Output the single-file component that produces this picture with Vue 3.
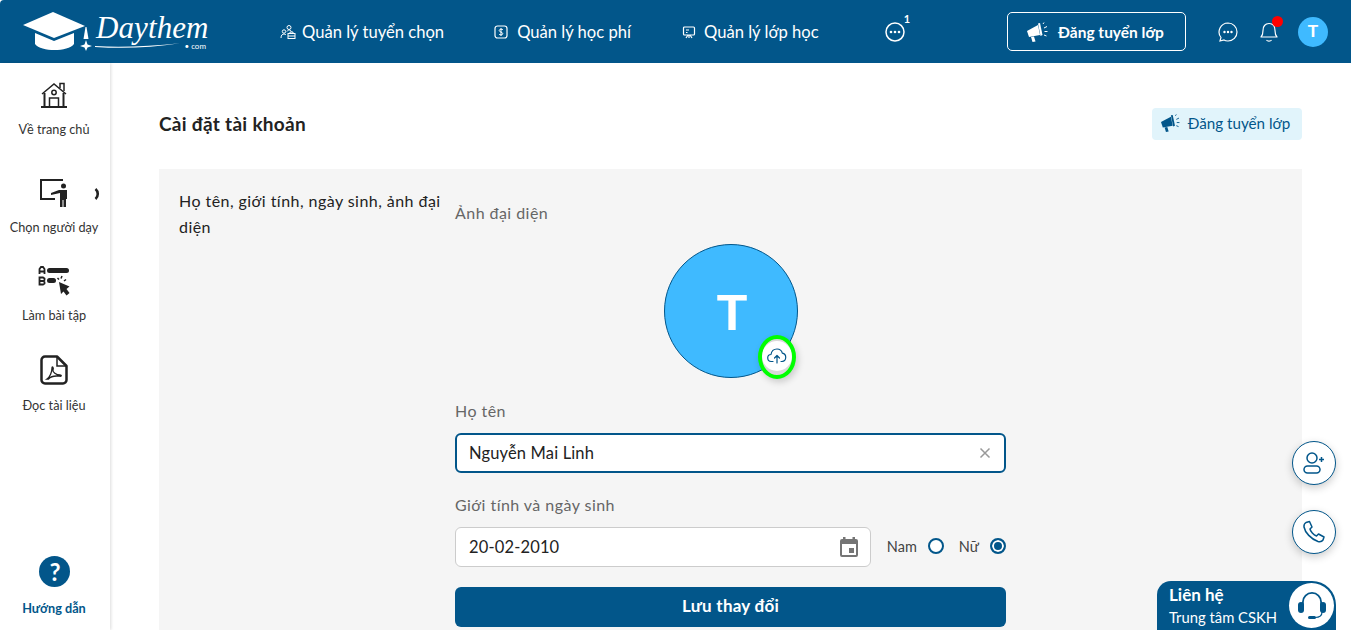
<template>
  <div class="page">
    <header class="topbar">
      <div class="logo">
        <svg class="cap" width="80" height="42" viewBox="0 0 80 42" fill="#fff">
          <path d="M0 13 L30 0 L62 14 L31 26 Z" />
          <path d="M12 21 L31 29 L51 21 V32 C45 40 18 40 12 32 Z" />
          <path d="M62.500 15 L63.500 15 L65.500 27 H60.500 Z" />
          <path d="M63 28 L64.500 32.500 L69 34 L64.500 35.500 L63 39 L61.500 35.500 L57 34 L61.500 32.500 Z" />
        </svg>
        <div class="logo-word">
          <span class="logo-name">Daythem</span>
          <svg class="swoosh" width="85" height="5" viewBox="0 0 92 5"><path d="M0 3 C30 5 60 3 92 0 C60 5 30 6 0 4Z" fill="#fff" /></svg>
          <span class="logo-com">• com</span>
        </div>
      </div>
      <nav class="mainnav">
        <a class="navitem hire">
          <svg width="16" height="16" viewBox="0 0 16 16" fill="none" stroke="#fff" stroke-width="1">
            <circle cx="9" cy="3.500" r="2" /><circle cx="4" cy="7.500" r="1.700" />
            <path d="M1 14c0-3 1.500-4 3-4 1 0 1.500.4 2 1M7 7.500c.5-1 1.200-1.500 2-1.500s2 .5 2.500 1.500" />
            <rect x="8" y="9.500" width="7" height="5" /><path d="M10 9.500V8h3v1.500M8 12h7" />
          </svg>
          Quản lý tuyển chọn
        </a>
        <a class="navitem fee">
          <svg width="14" height="14" viewBox="0 0 14 14" fill="none" stroke="#fff" stroke-width="1.200">
            <rect x="1" y="1" width="12" height="12" rx="2.500" />
            <path d="M9 4.800C8.500 4 5.200 3.800 5.200 5.500S8.800 7 8.800 8.700 5.500 10 5 9.200M7 3v8" stroke-width="1" />
          </svg>
          Quản lý học phí
        </a>
        <a class="navitem klass">
          <svg width="14" height="14" viewBox="0 0 14 14" fill="none" stroke="#fff" stroke-width="1.200">
            <rect x="1.500" y="2" width="11" height="8" rx="1" />
            <path d="M4 5h3M4 7.500h1.500M7 10v3M4 13l2-3M10 13l-2-3" />
          </svg>
          Quản lý lớp học
        </a>
        <a class="more">
          <svg width="20" height="20" viewBox="0 0 20 20" fill="none">
            <circle cx="10" cy="10" r="9" stroke="#fff" stroke-width="1.500" />
            <circle cx="6" cy="10" r="1.300" fill="#fff" /><circle cx="10" cy="10" r="1.300" fill="#fff" /><circle cx="14" cy="10" r="1.300" fill="#fff" />
          </svg>
          <b class="more-count">1</b>
        </a>
      </nav>
      <button class="post-btn">
        <svg class="horn" width="22" height="20" viewBox="0 0 22 20" fill="#fff">
          <path d="M1 9 L12 3 L14 13 L3 15 Z" />
          <path d="M12 1.500 L14 1 L16.500 13 L14.500 14 Z" />
          <path d="M5 15 L8 14.500 L9.500 19.500 L6.500 20 Z" />
          <path d="M17 2l1-1.500M18 6l3-1.500M18.500 9.500h3M18 13l2.500 1" stroke="#fff" fill="none" />
        </svg>
        Đăng tuyển lớp
      </button>
      <div class="top-icons">
        <svg width="20" height="20" viewBox="0 0 20 20" fill="none" stroke="#fff" stroke-width="1.200">
          <path d="M10 1a9 9 0 0 1 0 18c-1.500 0-3-.3-4-1l-4 1 1-3.500A9 9 0 0 1 10 1Z" />
          <circle cx="6.500" cy="10" r=".6" fill="#fff" /><circle cx="10" cy="10" r=".6" fill="#fff" /><circle cx="13.500" cy="10" r=".6" fill="#fff" />
        </svg>
        <span class="bell">
          <svg width="20" height="24" viewBox="0 0 20 24" fill="none" stroke="#fff" stroke-width="1.200">
            <path d="M2 17c1.500-1.500 2-3 2-6.500C4 6 6.500 3.500 10 3.500S16 6 16 10.500c0 3.500.5 5 2 6.500Z" stroke-linejoin="round" />
            <path d="M7.500 20c1 1.500 4 1.500 5 0" />
          </svg>
          <i class="bell-dot"></i>
        </span>
        <span class="avatar-small">T</span>
      </div>
    </header>

    <div class="body">
      <aside class="sidebar">
        <a class="side-item home">
          <svg width="28" height="26" viewBox="0 0 28 26" fill="none" stroke="#222" stroke-width="1.500">
            <path d="M2 12 L14 2 L26 12" /><path d="M20 6V1.500h4v7.500" />
            <path d="M4.500 11v13M23.500 11v13M1 25h26" stroke-width="2" />
            <circle cx="14" cy="10.500" r="2.200" /><path d="M9.500 24v-8h9v8" />
          </svg>
          <span>Về trang chủ</span>
        </a>
        <a class="side-item teacher">
          <svg width="30" height="30" viewBox="0 0 30 30" fill="#222">
            <path d="M1 1h23v2H3v17h13v2H1Z" />
            <circle cx="24.500" cy="8" r="2.500" />
            <path d="M12 15l8-3h8v9h-1v8h-2.500v-7h-1v7H21V15l-9 2Z" />
          </svg>
          <svg class="chev" width="6" height="12" viewBox="0 0 6 12" fill="none" stroke="#222" stroke-width="2.600"><path d="M1.500 1c3 2.500 3 7.500 0 10" /></svg>
          <span>Chọn người dạy</span>
        </a>
        <a class="side-item exercise">
          <svg width="32" height="30" viewBox="0 0 32 30" fill="#222">
            <rect x="9" y="2" width="22" height="5" rx="2.500" />
            <rect x="9" y="12" width="9" height="5" rx="2.500" />
            <path d="M21 16 L31.500 20.500 L28.500 23 L31.500 27 L28.500 29.500 L25.500 25.500 L23 28 Z" />
            <path d="M1.500 8V3L3 1h2l1.500 2v5M1.500 5.500h5" fill="none" stroke="#222" stroke-width="1.800" />
            <path d="M1.500 11.500H5l1.500 1v1.500l-1 1 1 1v1.500l-1.500 1H1.500ZM1.500 15h4" fill="none" stroke="#222" stroke-width="1.800" />
            <path d="M19.500 12l1.500 1.500M24 10l-1 2.500M28 13.500l-2 1.500" fill="none" stroke="#222" stroke-width="1.500" />
          </svg>
          <span>Làm bài tập</span>
        </a>
        <a class="side-item docs">
          <svg width="28" height="30" viewBox="0 0 28 30" fill="none" stroke="#222" stroke-width="2.500">
            <path d="M17 1.500H5A3.500 3.500 0 0 0 1.500 5v20A3.500 3.500 0 0 0 5 28.500h18a3.500 3.500 0 0 0 3.500-3.500V11Z" stroke-linejoin="round" />
            <path d="M17 1.500V11h9.500" stroke-width="1.500" />
            <path d="M7 24c3-2 5-7 5-11 0-2 2-1 1 2-.5 2 3 5 7 5 2 0 1.500 1.500-.5 1.200-4-.5-9 .5-11 2.800Z" stroke-width="1.300" />
          </svg>
          <span>Đọc tài liệu</span>
        </a>
        <a class="side-item help">
          <i class="help-icon">?</i>
          <span>Hướng dẫn</span>
        </a>
      </aside>

      <main class="content">
        <div class="content-head">
          <h1>Cài đặt tài khoản</h1>
          <button class="post-light">
            <svg width="20" height="18" viewBox="0 0 22 20" fill="#02568a">
              <path d="M1 9 L12 3 L14 13 L3 15 Z" />
              <path d="M12 1.500 L14 1 L16.500 13 L14.500 14 Z" />
              <path d="M5 15 L8 14.500 L9.500 19.500 L6.500 20 Z" />
              <path d="M17 2l1-1.500M18 6l3-1.500M18.500 9.500h3M18 13l2.500 1" stroke="#02568a" fill="none" />
            </svg>
            Đăng tuyển lớp
          </button>
        </div>

        <section class="panel">
          <div class="panel-title">Họ tên, giới tính, ngày sinh, ảnh đại diện</div>
          <form class="panel-form" @submit.prevent>
            <label class="field-label first">Ảnh đại diện</label>
            <div class="avatar-wrap">
              <div class="avatar-big">
                T
                <span class="upload">
                  <span class="upload-inner">
                    <svg width="20" height="16" viewBox="0 0 20 16" fill="none" stroke="#02568a" stroke-width="1.200" stroke-linecap="round" stroke-linejoin="round">
                      <path d="M6 13.500H4.500a3.500 3.500 0 0 1-.5-7C4.500 3 7 1 10 1c2.700 0 4.700 1.700 5.300 4.200A4.200 4.200 0 0 1 15 13.500h-1" />
                      <path d="M10 15V7.500M7.500 10 10 7.500l2.500 2.500" />
                    </svg>
                  </span>
                </span>
              </div>
            </div>
            <label class="field-label name-label">Họ tên</label>
            <div class="input focus">
              <span>Nguyễn Mai Linh</span>
              <svg width="12" height="12" viewBox="0 0 12 12" stroke="#999" stroke-width="1.500"><path d="M1.500 1.500l9 9M10.500 1.500l-9 9" /></svg>
            </div>
            <label class="field-label gender-label">Giới tính và ngày sinh</label>
            <div class="row">
              <div class="input date">
                <span>20-02-2010</span>
                <svg width="20" height="22" viewBox="0 0 20 22" fill="#757575">
                  <path d="M4 1h2.500v2h7V1H16v2h1a2 2 0 0 1 2 2v14a2 2 0 0 1-2 2H3a2 2 0 0 1-2-2V5a2 2 0 0 1 2-2h1Zm-1 7v11h14V8Z" />
                  <rect x="10" y="12" width="5" height="5" />
                </svg>
              </div>
              <div class="radios">
                <span class="radio-text">Nam</span><i class="radio"></i>
                <span class="radio-text nu">Nữ</span><i class="radio on"></i>
              </div>
            </div>
            <button class="save">Lưu thay đổi</button>
          </form>
        </section>
      </main>
    </div>

    <button class="float-btn add">
      <svg width="24" height="24" viewBox="0 0 24 24" fill="none" stroke="#02568a" stroke-width="1.500">
        <circle cx="10" cy="7" r="5" /><rect x="2" y="15" width="16" height="7" rx="3.500" /><path d="M17 8.500h5M19.500 6v5" />
      </svg>
    </button>
    <button class="float-btn phone">
      <svg width="24" height="24" viewBox="0 0 24 24" fill="none" stroke="#02568a" stroke-width="1.500" stroke-linejoin="round">
        <path d="M4 2.500 7.500 1.500 10 7 8 9c.5 2.500 3.500 6 6.500 7l2-2 5.500 3-1 3c-1 1.500-3 2-5 1.500C9 19 3 12.500 2 7c-.3-2 .5-3.500 2-4.500Z" />
      </svg>
    </button>
    <div class="contact">
      <div class="contact-text">
        <b>Liên hệ</b>
        <span>Trung tâm CSKH</span>
      </div>
      <span class="contact-icon">
        <svg width="28" height="30" viewBox="0 0 28 30" fill="#02568a">
          <path d="M4 14V11a10 10 0 0 1 20 0v3h-1.800v-3a8.200 8.200 0 0 0-16.400 0v3Z" />
          <rect x="0" y="11" width="6" height="11" rx="3" />
          <rect x="22" y="11" width="6" height="11" rx="3" />
          <path d="M24 21c0 4-3 5.500-7 5.500" fill="none" stroke="#02568a" stroke-width="1.200" />
          <rect x="10" y="25" width="8" height="3" rx="1.500" />
        </svg>
      </span>
    </div>
  </div>
</template>

<script setup>
</script>

<style>
html, body {
  margin: 0;
  background: #fff;
  overflow: hidden;
}
</style>

<style scoped>
.page {
  width: 1351px;
  height: 630px;
  overflow: hidden;
  position: relative;
  border-top-left-radius: 4px;
  font-family: "Lato", "Noto Sans", sans-serif;
  color: #222;
}
button {
  font-family: inherit;
  cursor: pointer;
}
.topbar {
  height: 63px;
  background: #02568a;
  display: flex;
  align-items: center;
  color: #fff;
}
.logo {
  width: 280px;
  flex: none;
  display: flex;
  align-items: center;
  padding-left: 23px;
  box-sizing: border-box;
}
.cap {
  flex: none;
  margin-top: 3px;
}
.logo-word {
  position: relative;
  margin-left: -6px;
  width: 115px;
  height: 48px;
}
.logo-name {
  position: absolute;
  left: -1px;
  top: 9px;
  font: italic 31px/22px "Liberation Serif", serif;
  letter-spacing: 0.1px;
}
.swoosh {
  position: absolute;
  left: -2px;
  top: 35px;
}
.logo-com {
  position: absolute;
  right: 6px;
  top: 34px;
  font-size: 8px;
  line-height: 9px;
}
.mainnav {
  display: flex;
  align-items: center;
  width: 727px;
  flex: none;
}
.navitem {
  display: flex;
  align-items: center;
  font-size: 16.600px;
  margin-right: 50px;
  white-space: nowrap;
}
.hire {
  gap: 6px;
}
.fee {
  gap: 9px;
  margin-right: 51px;
}
.klass {
  gap: 8px;
}
.more {
  position: relative;
  display: block;
  height: 20px;
  margin-left: 16px;
}
.more-count {
  position: absolute;
  left: 19px;
  top: -10px;
  font-size: 11px;
}
.post-btn {
  width: 179px;
  height: 39px;
  background: transparent;
  border: 1px solid #fff;
  border-radius: 5px;
  color: #fff;
  display: flex;
  align-items: center;
  justify-content: center;
  gap: 10px;
  font-size: 15.500px;
  font-weight: 700;
  padding: 0 3px 0 0;
}
.top-icons {
  display: flex;
  align-items: center;
  margin-left: 32px;
  gap: 21px;
}
.bell {
  position: relative;
  display: block;
  height: 24px;
}
.bell-dot {
  position: absolute;
  right: -4px;
  top: -4px;
  width: 11px;
  height: 11px;
  border-radius: 50%;
  background: #f00;
}
.avatar-small {
  width: 30px;
  height: 30px;
  border-radius: 50%;
  background: #3fbaff;
  display: flex;
  align-items: center;
  justify-content: center;
  font: 700 17px "Liberation Sans", sans-serif;
  margin-left: -2px;
}
.body {
  display: flex;
  height: 567px;
}
.sidebar {
  width: 110px;
  flex: none;
  box-sizing: border-box;
  padding-right: 2px;
  box-shadow: 1px 0 3px rgba(0, 0, 0, 0.14);
  display: flex;
  flex-direction: column;
  align-items: center;
}
.side-item {
  position: relative;
  display: flex;
  flex-direction: column;
  align-items: center;
  font-size: 12.700px;
  color: #333;
  white-space: nowrap;
}
.side-item span {
  line-height: 16px;
}
.home {
  margin-top: 19px;
  gap: 13px;
}
.teacher {
  margin-top: 41px;
  gap: 11px;
}
.chev {
  position: absolute;
  right: -2px;
  top: 10px;
}
.exercise {
  margin-top: 31px;
  gap: 11px;
}
.docs {
  margin-top: 32px;
  gap: 12px;
}
.help {
  margin-top: auto;
  padding-bottom: 14px;
  gap: 13px;
  color: #02568a;
  font-weight: 700;
}
.help-icon {
  width: 31px;
  height: 31px;
  margin-left: 2px;
  border-radius: 50%;
  background: #02568a;
  color: #fff;
  display: flex;
  align-items: center;
  justify-content: center;
  font: 700 24px "Lato", sans-serif;
}
.content {
  flex: 1;
  padding: 0 49px;
  min-width: 0;
}
.content-head {
  height: 106px;
  display: flex;
  align-items: center;
  justify-content: space-between;
  padding: 31px 0 15px;
  box-sizing: border-box;
}
h1 {
  margin: 0 0 2px;
  font-size: 19px;
  letter-spacing: 0.3px;
  font-weight: 700;
  color: #222;
}
.post-light {
  width: 150px;
  height: 32px;
  background: #e1f4fb;
  border: 0;
  border-radius: 4px;
  color: #02568a;
  font-size: 15.200px;
  display: flex;
  align-items: center;
  justify-content: center;
  gap: 8px;
  padding: 0 4px 2px 0;
}
.panel {
  background: #f5f5f5;
  display: flex;
  padding: 20px 20px 0;
  height: 500px;
  box-sizing: border-box;
}
.panel-title {
  width: 276px;
  flex: none;
  padding-right: 10px;
  box-sizing: border-box;
  font-size: 16px;
  letter-spacing: 0.450px;
  line-height: 26px;
  margin-top: -1px;
}
.panel-form {
  width: 551px;
  display: flex;
  flex-direction: column;
}
.field-label {
  font-size: 16px;
  letter-spacing: 0.450px;
  line-height: 20px;
  color: #666;
}
.first {
  margin-top: 14px;
}
.avatar-wrap {
  display: flex;
  justify-content: center;
  margin-top: 21px;
}
.avatar-big {
  position: relative;
  width: 134px;
  height: 134px;
  box-sizing: border-box;
  border: 1px solid #02568a;
  border-radius: 50%;
  background: #3fbaff;
  color: #fff;
  display: flex;
  align-items: center;
  justify-content: center;
  padding: 3px 0 0 3px;
  font: 700 50px "Liberation Sans", sans-serif;
}
.upload {
  position: absolute;
  right: 1px;
  bottom: -2px;
  width: 38px;
  height: 44px;
  box-sizing: border-box;
  border: 4px solid #0f0;
  border-radius: 50%;
  background: #d9d9d9;
  display: flex;
  align-items: flex-start;
  justify-content: center;
  box-shadow: 2px 3px 7px rgba(0, 0, 0, 0.18);
  overflow: hidden;
}
.upload-inner {
  width: 30px;
  height: 30px;
  flex: none;
  border-radius: 50%;
  background: #fff;
  display: flex;
  align-items: center;
  justify-content: center;
  margin-top: 2px;
}
.name-label {
  margin-top: 23px;
}
.input {
  height: 40px;
  box-sizing: border-box;
  background: #fff;
  border-radius: 6px;
  display: flex;
  align-items: center;
  justify-content: space-between;
  font-size: 16.500px;
  letter-spacing: 0.150px;
  color: #222;
}
.input span {
  margin-bottom: 1px;
}
.focus {
  margin-top: 12px;
  border: 2px solid #02568a;
  padding: 0 13px 0 12px;
}
.gender-label {
  margin-top: 22px;
}
.row {
  display: flex;
  align-items: center;
  margin-top: 12px;
  justify-content: space-between;
}
.date {
  width: 416px;
  border: 1px solid #ccc;
  padding: 0 11px 0 13px;
}
.radios {
  display: flex;
  align-items: center;
  font-size: 14.500px;
  color: #444;
  margin-bottom: 2px;
}
.radio-text {
  margin-right: 11px;
}
.radio-text.nu {
  margin-left: 15px;
}
.radio {
  width: 16px;
  height: 16px;
  box-sizing: border-box;
  border: 2px solid #02568a;
  border-radius: 50%;
  display: block;
  background: #fff;
}
.radio.on {
  background: #02568a;
  box-shadow: inset 0 0 0 2px #fff;
}
.save {
  margin-top: 20px;
  height: 40px;
  flex: none;
  background: #02568a;
  border: 0;
  border-radius: 6px;
  color: #fff;
  font-size: 17px;
  letter-spacing: 0.250px;
  font-weight: 700;
  padding: 0 0 3px;
}
.float-btn {
  position: absolute;
  right: 15px;
  width: 44px;
  height: 44px;
  border: 1px solid #02568a;
  border-radius: 50%;
  background: #fff;
  box-shadow: 0 3px 8px rgba(0, 0, 0, 0.2);
  display: flex;
  align-items: center;
  justify-content: center;
  padding: 0;
}
.add {
  top: 441px;
}
.phone {
  top: 510px;
}
.contact {
  position: absolute;
  left: 1157px;
  top: 581px;
  width: 179px;
  height: 49px;
  background: #02568a;
  border-radius: 14px 24px 0 0;
  color: #fff;
  display: flex;
  align-items: flex-start;
  justify-content: space-between;
}
.contact-text {
  display: flex;
  flex-direction: column;
  padding: 4px 0 0 12px;
}
.contact-text b {
  font-size: 17px;
  line-height: 20px;
}
.contact-text span {
  font-size: 14.800px;
  line-height: 24px;
  white-space: nowrap;
}
.contact-icon {
  width: 45px;
  height: 45px;
  border-radius: 50%;
  background: #fff;
  display: flex;
  align-items: center;
  justify-content: center;
  margin: 2px 2px 0 0;
}
</style>
